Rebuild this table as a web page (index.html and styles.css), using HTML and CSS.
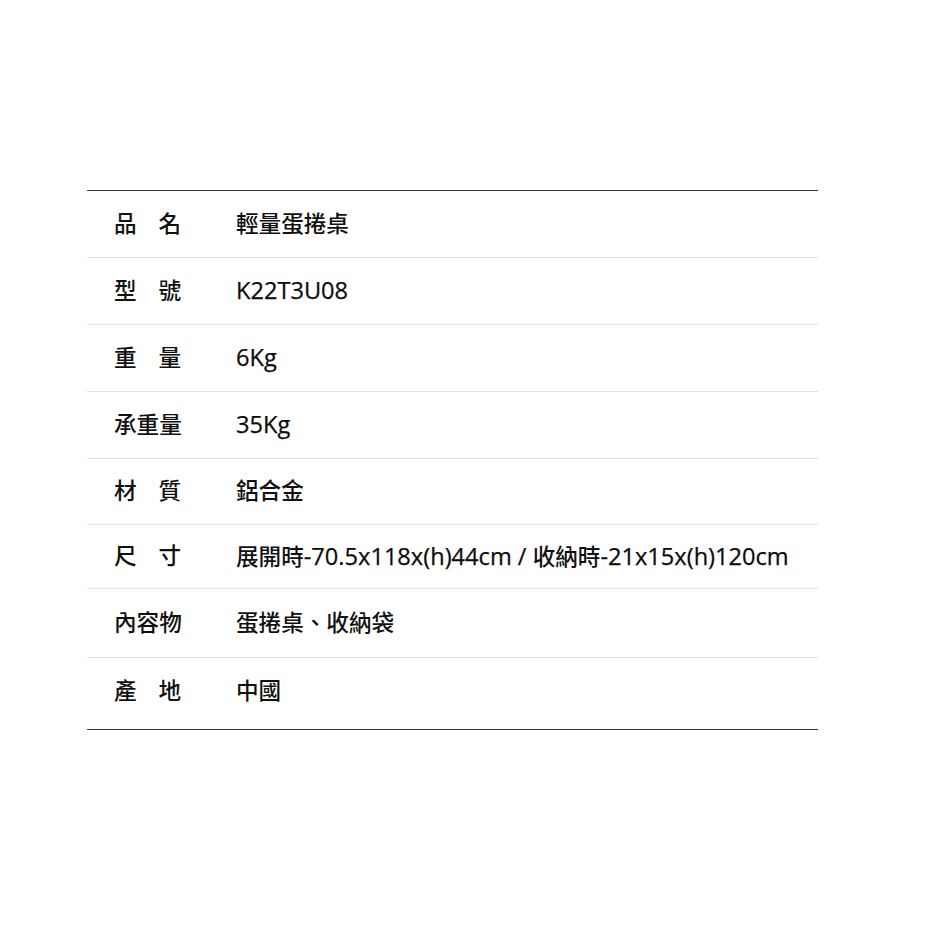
FILE: index.html
```html
<!DOCTYPE html>
<html lang="zh-Hant">
<head>
<meta charset="utf-8">
<title>產品規格</title>
<link rel="stylesheet" href="styles.css">
</head>
<body>
<div class="spec">
  <div class="row r1"><div class="label">品名</div><div class="value">輕量蛋捲桌</div></div>
  <div class="row r2"><div class="label">型號</div><div class="value"><span class="lat">K22T3U08</span></div></div>
  <div class="row r3"><div class="label">重量</div><div class="value"><span class="lat">6Kg</span></div></div>
  <div class="row r4"><div class="label">承重量</div><div class="value"><span class="lat">35Kg</span></div></div>
  <div class="row r5"><div class="label">材質</div><div class="value">鋁合金</div></div>
  <div class="row r6"><div class="label">尺寸</div><div class="value">展開時<span class="lat">-70.5x118x(h)44cm / </span>收納時<span class="lat">-21x15x(h)120cm</span></div></div>
  <div class="row r7"><div class="label">內容物</div><div class="value">蛋捲桌、收納袋</div></div>
  <div class="row r8"><div class="label">產地</div><div class="value">中國</div></div>
</div>
</body>
</html>
```
FILE: styles.css
```css
html, body {
  margin: 0;
  padding: 0;
  background: #ffffff;
}
body {
  font-family: "Open Sans", "Noto Sans CJK TC", sans-serif;
  color: #111111;
  font-size: 22.6px;
  font-weight: 500;
}
.spec {
  margin: 190px 0 0 87px;
  width: 731px;
  border-top: 1.5px solid #3a3a3a;
  border-bottom: 1.5px solid #3a3a3a;
}
.row {
  display: flex;
  align-items: center;
  border-bottom: 1px solid #e2e2e2;
  box-sizing: border-box;
}
.row:last-child {
  border-bottom: none;
}
.label {
  width: 67px;
  margin-left: 27px;
  text-align: justify;
  text-align-last: justify;
  line-height: 1;
  white-space: nowrap;
}
.value {
  margin-left: 55px;
  line-height: 1;
  white-space: nowrap;
}
.lat {
  font-weight: 500;
  font-size: 23.6px;
  color: #0c0c0c;
  -webkit-text-stroke: 0.25px #0c0c0c;
}
.r1, .r2, .r3, .r4 { height: 67px; }
.r5 { height: 66px; }
.r6 { height: 64px; }
.r7 { height: 69px; }
.r8 { height: 71px; padding-bottom: 4px; }
```
